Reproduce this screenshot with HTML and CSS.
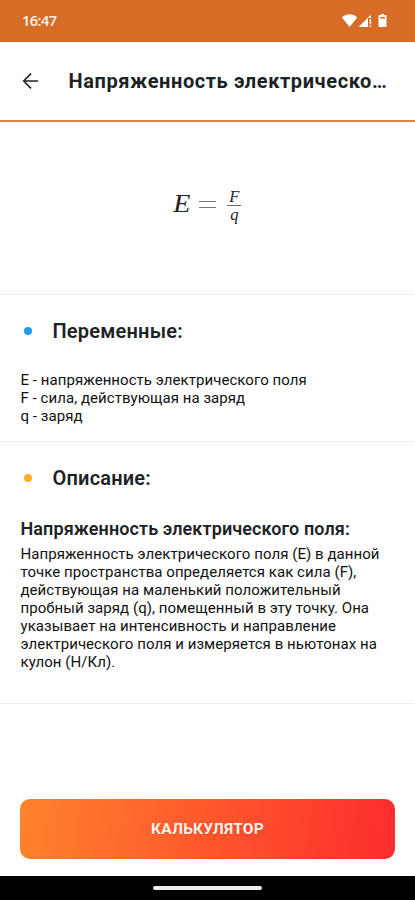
FILE: index.html
```html
<!DOCTYPE html>
<html lang="ru">
<head>
<meta charset="utf-8">
<title>Напряженность электрического поля</title>
<link rel="stylesheet" href="styles.css">
</head>
<body>
<div class="status">
  <span class="time">16:47</span>
  <svg class="status-icons" width="46" height="14" viewBox="0 0 46 14" fill="#fff">
    <path d="M0 3.500C4.200-.7 11-.7 15.200 3.500L7.600 13Z"/>
    <path d="M16.500 13 29 .8V4H26V13Z"/>
    <path d="M27.600 5.200h1.500v5h-1.500zM27.600 11.500h1.500V13h-1.500z"/>
    <path fill-rule="evenodd" d="M39 0h3v1H43.500q1 0 1 1V12q0 1-1 1H37.500q-1 0-1-1V2q0-1 1-1H39ZM38 3v1.600h5V3Z"/>
  </svg>
</div>
<header class="header">
  <svg class="back" width="18" height="18" viewBox="0 0 18 18" fill="none" stroke="#1c2326" stroke-width="1.600"><path d="M16.200 9H1.800M9 1.600 1.700 9 9 16.400"/></svg>
  <h1 class="title">Напряженность электрическо…</h1>
</header>
<main>
  <section class="formula">
    <span class="lhs">E</span>
    <span class="equals" aria-label="="></span>
    <span class="fraction"><span class="num">F</span><span class="den">q</span></span>
  </section>
  <section class="variables">
    <h2 class="heading"><i class="dot blue"></i><span>Переменные:</span></h2>
    <p class="text">E - напряженность электрического поля<br>F - сила, действующая на заряд<br>q - заряд</p>
  </section>
  <section class="description">
    <h2 class="heading"><i class="dot amber"></i><span>Описание:</span></h2>
    <h3 class="subheading">Напряженность электрического поля:</h3>
    <p class="text">Напряженность электрического поля (E) в данной<br>точке пространства определяется как сила (F),<br>действующая на маленький положительный<br>пробный заряд (q), помещенный в эту точку. Она<br>указывает на интенсивность и направление<br>электрического поля и измеряется в ньютонах на<br>кулон (Н/Кл).</p>
  </section>
</main>
<footer class="action"><button class="calc">КАЛЬКУЛЯТОР</button></footer>
<div class="navbar"><i class="handle"></i></div>
</body>
</html>
```
FILE: styles.css
```css
* { box-sizing: border-box; margin: 0; }
body {
  width: 415px; height: 900px; overflow: hidden;
  display: flex; flex-direction: column;
  background: #fff; color: #111;
  font-family: Roboto, "Noto Sans", sans-serif;
}
.status {
  flex: none; height: 41.5px; padding: 0 27px 0 22px;
  display: flex; align-items: center; justify-content: space-between;
  background: #d76c27;
}
.time { color: #fff4e8; font: 600 14.500px/20px "Open Sans", sans-serif; letter-spacing: -.55px; }
.header {
  flex: none; height: 80.5px; padding: 1px 20px 0 22px;
  display: flex; align-items: center;
  border-bottom: 2px solid #e08045;
}
.back { flex: none; margin-right: 28.5px; }
.title {
  flex: 1; min-width: 0; white-space: nowrap;
  color: #1c2326; font-size: 20px; line-height: 28px; font-weight: 700; letter-spacing: .6px;
}
main { flex: 1; }
section { border-bottom: 1px solid #f0f0f0; }
.formula {
  height: 173px; padding-bottom: 7px;
  display: flex; align-items: center; justify-content: center;
  font-family: "Liberation Serif", serif; font-style: italic; color: #222;
}
.lhs { font-size: 25.500px; line-height: 28px; transform: scaleX(1.1); margin: 0 10px 2px 0; }
.equals { width: 17px; height: 7px; border: solid #777; border-width: 1px 0; margin-right: 11px; }
.fraction { width: 14px; text-align: center; font-size: 16.500px; line-height: 17px; margin-top: 2px; }
.num, .den { display: block; }
.num { border-bottom: 1px solid #666; }
.variables { height: 147px; padding: 22px 20px 0 20.5px; }
.description { height: 262px; padding: 22px 20px 0 20.5px; }
.heading {
  display: flex; align-items: center; height: 28px;
  color: #1c2326; font-size: 20px; font-weight: 600; line-height: 28px; letter-spacing: .2px;
}
.dot { width: 8px; height: 8px; border-radius: 50%; margin: 0 20.5px 0 3.5px; }
.blue { background: #1c9cec; }
.amber { background: #ffab2d; }
.text { font-size: 15px; line-height: 18px; letter-spacing: .055px; white-space: nowrap; }
.variables .text { margin-top: 26px; }
.subheading { margin: 25px 0 4px; color: #1c2326; font-size: 18px; line-height: 24px; font-weight: 600; letter-spacing: .1px; white-space: nowrap; }
.action { flex: none; height: 77px; padding: 0 20px; }
.calc {
  display: block; width: 375px; height: 60px; padding-top: 1px; border: 0; border-radius: 10px;
  background: linear-gradient(100deg, #ff832c, #ff2b2d);
  color: #fff3e9; font: 700 15.500px/20px Roboto, sans-serif; letter-spacing: .2px;
  text-shadow: 0 1px 2px rgba(100, 0, 0, .2);
}
.navbar { flex: none; height: 24px; padding-top: 10px; background: #000; }
.handle { display: block; width: 109px; height: 4px; margin: 0 auto; border-radius: 2px; background: #eee; }
```
